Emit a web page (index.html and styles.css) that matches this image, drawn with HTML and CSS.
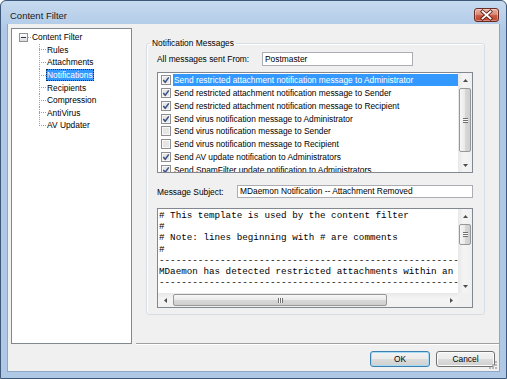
FILE: index.html
```html
<!DOCTYPE html>
<html lang="en">
<head>
<meta charset="utf-8">
<title>Content Filter</title>
<meta name="viewport" content="width=device-width,initial-scale=1">
<link rel="stylesheet" href="styles.css">
</head>

<body>
<svg class="defs" width="0" height="0" aria-hidden="true">
  <symbol id="chk-on" viewBox="0 0 10 10">
    <rect x=".5" y=".5" width="9" height="9" fill="#f4f4f4" stroke="#8f8f8f"/>
    <rect x="1.5" y="1.5" width="7" height="7" fill="#e6e6e6" stroke="#f8f8f8"/>
    <path d="M2.3 5 L4.2 7.2 L7.8 2.4" fill="none" stroke="#3b4f80" stroke-width="1.5"/>
  </symbol>
  <symbol id="chk-off" viewBox="0 0 10 10">
    <rect x=".5" y=".5" width="9" height="9" fill="#f4f4f4" stroke="#8f8f8f"/>
    <rect x="1.5" y="1.5" width="7" height="7" fill="#e6e6e6" stroke="#f8f8f8"/>
  </symbol>
  <symbol id="arr-up" viewBox="0 0 5 3"><path d="M0 3 L2.5 0 L5 3Z" fill="#4d4d4d"/></symbol>
  <symbol id="arr-down" viewBox="0 0 5 3"><path d="M0 0 L2.5 3 L5 0Z" fill="#4d4d4d"/></symbol>
  <symbol id="arr-left" viewBox="0 0 3 5"><path d="M3 0 L0 2.5 L3 5Z" fill="#4d4d4d"/></symbol>
  <symbol id="arr-right" viewBox="0 0 3 5"><path d="M0 0 L3 2.5 L0 5Z" fill="#4d4d4d"/></symbol>
</svg>

<div class="window">
  <!-- title bar -->
  <div class="titlebar">
    <span class="title">Content Filter</span>
    <span class="close">
      <svg width="25" height="14" viewBox="0 0 25 14">
        <path d="M8.5 3.5 L16.5 10.5 M16.5 3.5 L8.5 10.5" stroke="#5a1c13" stroke-width="3.4" stroke-linecap="square"/>
        <path d="M8.5 3.5 L16.5 10.5 M16.5 3.5 L8.5 10.5" stroke="#fff" stroke-width="1.8" stroke-linecap="square"/>
      </svg>
    </span>
  </div>

  <div class="client">
    <div class="main">
      <!-- left tree -->
      <div class="tree">
        <div class="node-root">
          <span class="expander"></span><span class="stub"></span><span class="label">Content Filter</span>
        </div>
        <ul class="children">
          <li><span class="label">Rules</span></li>
          <li><span class="label">Attachments</span></li>
          <li><span class="label sel">Notifications</span></li>
          <li><span class="label">Recipients</span></li>
          <li><span class="label">Compression</span></li>
          <li><span class="label">AntiVirus</span></li>
          <li><span class="label">AV Updater</span></li>
        </ul>
      </div>

      <!-- right pane -->
      <div class="pane">
        <fieldset class="group">
          <legend>Notification Messages</legend>

          <div class="field">
            <label class="from-label">All messages sent From:</label>
            <div class="edit from-edit">Postmaster</div>
          </div>

          <div class="listbox">
            <ul class="checks">
              <li><svg class="chk"><use href="#chk-on"/></svg><span class="item sel">Send restricted attachment notification message to Administrator</span></li>
              <li><svg class="chk"><use href="#chk-on"/></svg><span class="item">Send restricted attachment notification message to Sender</span></li>
              <li><svg class="chk"><use href="#chk-on"/></svg><span class="item">Send restricted attachment notification message to Recipient</span></li>
              <li><svg class="chk"><use href="#chk-on"/></svg><span class="item">Send virus notification message to Administrator</span></li>
              <li><svg class="chk"><use href="#chk-off"/></svg><span class="item">Send virus notification message to Sender</span></li>
              <li><svg class="chk"><use href="#chk-off"/></svg><span class="item">Send virus notification message to Recipient</span></li>
              <li><svg class="chk"><use href="#chk-on"/></svg><span class="item">Send AV update notification to Administrators</span></li>
              <li><svg class="chk"><use href="#chk-on"/></svg><span class="item">Send SpamFilter update notification to Administrators</span></li>
            </ul>
            <div class="vscroll">
              <div class="arrow"><svg class="glyph-v"><use href="#arr-up"/></svg></div>
              <div class="thumb thumb-list"><span class="grip-v"></span></div>
              <div class="arrow arrow-end"><svg class="glyph-v"><use href="#arr-down"/></svg></div>
            </div>
          </div>

          <div class="field field-subject">
            <label class="subject-label">Message Subject:</label>
            <div class="edit subject-edit">MDaemon Notification -- Attachment Removed</div>
          </div>

          <div class="memo">
<pre class="memo-text"># This template is used by the content filter
#
# Note: lines beginning with # are comments
#
------------------------------------------------------------
MDaemon has detected restricted attachments within an
------------------------------------------------------------</pre>
            <div class="vscroll">
              <div class="arrow"><svg class="glyph-v"><use href="#arr-up"/></svg></div>
              <div class="thumb thumb-memo"><span class="grip-v"></span></div>
              <div class="arrow arrow-end"><svg class="glyph-v"><use href="#arr-down"/></svg></div>
            </div>
            <div class="hscroll">
              <div class="arrow-h"><svg class="glyph-h"><use href="#arr-left"/></svg></div>
              <div class="thumb thumb-h"><span class="grip-h"></span></div>
              <div class="arrow-h arrow-end-h"><svg class="glyph-h"><use href="#arr-right"/></svg></div>
            </div>
            <div class="corner"></div>
          </div>
        </fieldset>
        <div class="sep"></div>
      </div>
    </div>

    <!-- dialog buttons -->
    <div class="buttons">
      <button class="btn btn-default">OK</button>
      <button class="btn">Cancel</button>
    </div>

    <svg class="sizegrip" width="10" height="10" viewBox="0 0 10 10">
      <g fill="#b8b8b8">
        <rect x="7" y="1" width="2" height="2"/>
        <rect x="4" y="4" width="2" height="2"/><rect x="7" y="4" width="2" height="2"/>
        <rect x="1" y="7" width="2" height="2"/><rect x="4" y="7" width="2" height="2"/><rect x="7" y="7" width="2" height="2"/>
      </g>
    </svg>
  </div>
</div>
</body>
</html>
```

FILE: styles.css
```css
/* ── palette ───────────────────────────── */
:root{
  --c-face:#f0f0f0;
  --c-frame:#aec8e6;
  --c-edit:#abadb3;
  --c-list:#828790;
  --c-sel:#3399ff;
  --c-dots:#a0a0a0;
}

/* ── base ──────────────────────────────── */
*,*::before,*::after{box-sizing:border-box}
body{margin:0;background:#fff;color:#000;
     font-family:"Liberation Sans",Arial,sans-serif;font-size:8.4px}
.defs{position:absolute;width:0;height:0;overflow:hidden}

/* ── window frame ──────────────────────── */
.window{width:507px;height:379px;display:flex;flex-direction:column;
        border:1px solid #3d5879;border-radius:6px 6px 0 0;
        background:linear-gradient(#c6daef,var(--c-frame) 30px,var(--c-frame))}
.titlebar{height:23px;flex:none;display:flex;align-items:flex-start;
          justify-content:space-between;padding:7px 7px 0 9px}
.title{margin-top:2px;font-size:9.5px;line-height:12px;color:#1b1b1b}
.close{width:25px;height:14px;display:block;border:1px solid #6d2c23;border-radius:3px;
       background:linear-gradient(#eab0a3,#d98b78 45%,#c75a43 55%,#c2462f);
       box-shadow:inset 0 0 0 1px rgba(255,255,255,.35)}
.close svg{display:block;margin:-1px}

.client{flex:1;margin:0 6px 6px;background:var(--c-face);
        border:1px solid #8da7c4;border-top:0;
        display:flex;flex-direction:column;position:relative}
.main{height:320px;flex:none;display:flex}

/* ── tree ──────────────────────────────── */
.tree{width:121px;height:316px;margin:4px 4px 0 3px;padding:2px 0 0 7px;
      border:1px solid var(--c-list);background:#fff}
.node-root{display:flex;align-items:center;height:12.6px}
.expander{width:9px;height:9px;border:1px solid #919191;position:relative;
          background:linear-gradient(#fff,#dcdcdc)}
.expander::after{content:"";position:absolute;left:1px;top:3px;width:5px;height:1px;background:#27374f}
.stub{width:3px;height:1px;
      background:repeating-linear-gradient(to right,var(--c-dots) 0 1px,transparent 1px 2px)}
.label{padding:0 1px;line-height:12px;white-space:nowrap}
.children{list-style:none;margin:0 0 0 20px;padding:0}
.children li{height:12.6px;display:flex;align-items:center;padding-left:7px;
  background:
    repeating-linear-gradient(var(--c-dots) 0 1px,transparent 1px 2px) 0 0/1px 100% no-repeat,
    repeating-linear-gradient(to right,var(--c-dots) 0 1px,transparent 1px 2px) 0 50%/7px 1px no-repeat}
.children li:last-child{
  background:
    repeating-linear-gradient(var(--c-dots) 0 1px,transparent 1px 2px) 0 0/1px 50% no-repeat,
    repeating-linear-gradient(to right,var(--c-dots) 0 1px,transparent 1px 2px) 0 50%/7px 1px no-repeat}
.label.sel{background:var(--c-sel);color:#fff;height:12px;
           outline:1px dotted #0d2d5a;outline-offset:-1px}

/* ── right pane / group box ────────────── */
.pane{flex:1;display:flex;flex-direction:column;min-width:0}
.group{margin:14px 14px 0 10px;padding:4px 11px 6px 10px;min-width:0;
       border:1px solid #d5dfe5;border-radius:3px;box-shadow:inset 1px 1px 0 #fff}
.group legend{margin-left:-7px;padding:0 2px;line-height:10px}
.sep{margin-top:auto;height:1px;background:var(--c-dots);box-shadow:0 1px 0 #fff}

.field{display:flex;align-items:center;height:14px}
.from-label{width:105px}
.edit{height:14px;border:1px solid var(--c-edit);background:#fff;
      padding:0 2px;line-height:12px;white-space:nowrap;overflow:hidden}
.from-edit{width:151px}
.field-subject{margin-top:12px;height:13px}
.subject-label{width:80px}
.subject-edit{flex:1;height:13px;line-height:11px}

/* ── check list ────────────────────────── */
.listbox{margin-top:6px;height:101px;display:flex;
         border:1px solid var(--c-list);background:#fff}
.checks{flex:1;min-width:0;list-style:none;margin:0;padding:1px 0 0 3px;overflow:hidden}
.checks li{height:12.75px;display:flex;align-items:center}
.chk{width:10px;height:10px;flex:none;margin-right:2px}
.item{flex:1;height:12px;line-height:12px;padding:0 1px;white-space:nowrap;overflow:hidden}
.item.sel{background:var(--c-sel);color:#fff}

/* ── scroll bars ───────────────────────── */
.vscroll{width:14px;flex:none;display:flex;flex-direction:column;
         background:linear-gradient(to right,#e8e8e8,#f4f4f4 40%,#f0f0f0)}
.arrow{height:14px;flex:none;display:flex;align-items:center;justify-content:center}
.arrow-end{margin-top:auto}
.glyph-v{width:5px;height:3px}
.thumb{border:1px solid #979797;border-radius:2px;display:flex;
       align-items:center;justify-content:center}
.vscroll .thumb{margin:1px 1px 0;
                background:linear-gradient(to right,#f6f6f6,#e9e9e9 50%,#d8d8d8 50%,#cfcfcf)}
.thumb-list{height:64px}
.thumb-memo{height:21px}
.grip-v{width:5px;height:5px;
        background:repeating-linear-gradient(#6f6f6f 0 1px,#fafafa 1px 2px)}

/* ── memo ──────────────────────────────── */
.memo{margin-top:10px;height:100px;display:grid;
      grid-template-columns:1fr 14px;grid-template-rows:1fr 14px;
      border:1px solid var(--c-list);background:#fff}
.memo-text{margin:0;padding:1px 0 0 1px;overflow:hidden;white-space:pre;
           font-family:"Liberation Mono","Courier New",monospace;
           font-size:9.25px;line-height:11.2px}
.hscroll{display:flex;align-items:stretch;
         background:linear-gradient(#e8e8e8,#f4f4f4 40%,#f0f0f0)}
.arrow-h{width:14px;flex:none;display:flex;align-items:center;justify-content:center}
.arrow-end-h{margin-left:auto}
.glyph-h{width:3px;height:5px}
.thumb-h{width:214px;margin:1px 0 1px 1px;
         background:linear-gradient(#f6f6f6,#e9e9e9 50%,#d8d8d8 50%,#cfcfcf)}
.grip-h{width:5px;height:5px;
        background:repeating-linear-gradient(to right,#6f6f6f 0 1px,#fafafa 1px 2px)}
.corner{background:var(--c-face)}

/* ── buttons ───────────────────────────── */
.buttons{flex:1;display:flex;justify-content:flex-end;align-items:flex-start;
         gap:6px;padding:7px 4px 0 0}
.btn{height:16px;width:59px;padding:0;font:inherit;color:#000;
     border:1px solid #707070;border-radius:3px;
     background:linear-gradient(#f2f2f2,#ebebeb 50%,#dddddd 50%,#cfcfcf);
     box-shadow:inset 0 0 0 1px #fcfcfc}
.btn-default{width:60px;border-color:#3c7fb1;box-shadow:inset 0 0 0 1px #a6dcf6}
.sizegrip{position:absolute;right:1px;bottom:1px}
```
